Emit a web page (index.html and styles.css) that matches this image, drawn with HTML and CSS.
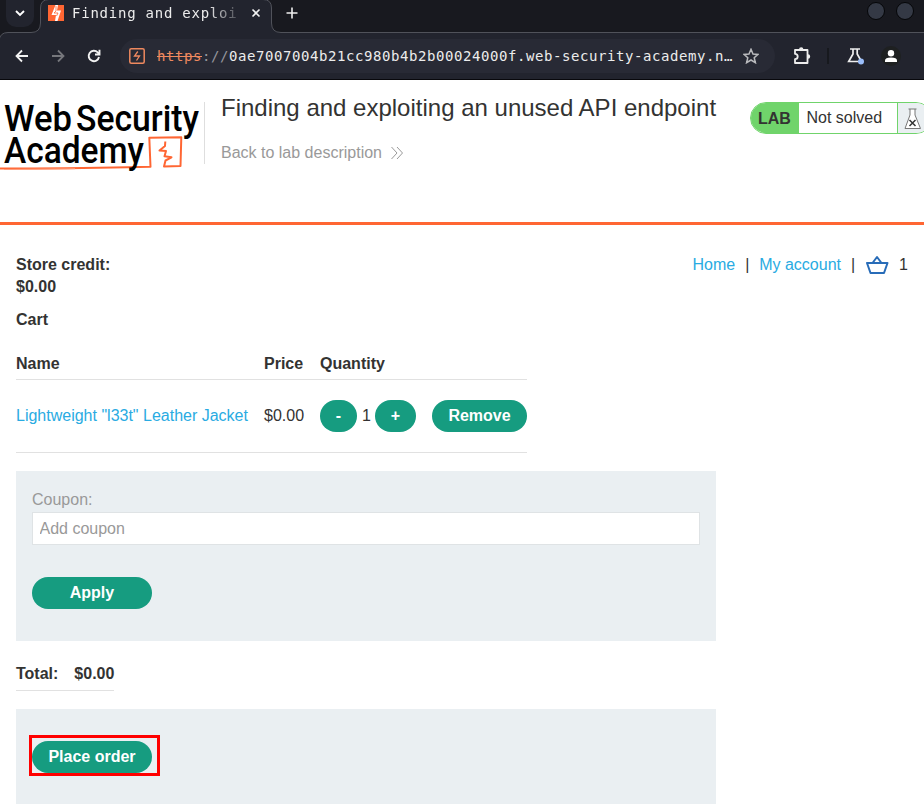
FILE: index.html
```html
<!DOCTYPE html>
<html lang="en">
<head>
<meta charset="utf-8">
<title>Finding and exploiting an unused API endpoint</title>
<link rel="stylesheet" href="styles.css">
</head>
<body>
<div class="browser">
  <svg class="frame" width="924" height="80" viewBox="0 0 924 80">
    <path d="M-1 81V40.500Q0 32.500 8 32.500H31Q40.500 32.500 40.500 23V8Q40.500 -0.500 49 -0.500H263Q271.500 -0.500 271.500 8V23Q271.500 32.500 281 32.500H925V81Z" fill="#22242e" stroke="#50525a"/>
    <path d="M0 79.500H924" stroke="#08080c"/>
  </svg>
  <div class="tabs">
    <div class="tab-menu"><svg width="34" height="27" viewBox="0 0 34 27"><path d="M10 11l4 4 4-4" fill="none" stroke="#fff" stroke-width="1.900"/></svg></div>
    <div class="tab">
      <svg width="16" height="16" viewBox="0 0 16 16"><path fill="#ff6633" d="M0 0h16v16H0z"/><path fill="#fff" d="M7.500 0H10L9 5.500h4L9.500 16H7l1-6H3.500z"/><path d="M8 1v5l-2 2h4l-1.500 3" fill="none" stroke="#ff6633" stroke-width=".8"/></svg>
      <span class="tab-title">Finding and exploi</span>
      <svg class="close" width="10" height="10" viewBox="0 0 10 10"><path d="M1.500 1.500l7 7m0-7l-7 7" stroke="#f2f2f2" stroke-width="1.600"/></svg>
    </div>
    <svg class="plus" width="12" height="12" viewBox="0 0 12 12"><path d="M6 .5v11M.5 6h11" stroke="#eee" stroke-width="1.600"/></svg>
    <div class="window-dots"><i></i><i></i></div>
  </div>
  <div class="toolbar">
    <svg class="back" width="14" height="14" viewBox="0 0 14 14"><path d="M13 7H2m5-5.500L1.500 7 7 12.500" fill="none" stroke="#f2f2f2" stroke-width="1.800"/></svg>
    <svg class="forward" width="14" height="14" viewBox="0 0 14 14"><path d="M1 7h11M7 1.500L12.500 7 7 12.500" fill="none" stroke="#76777c" stroke-width="1.800"/></svg>
    <svg class="reload" width="14" height="14" viewBox="0 0 14 14"><path d="M12 8a5.200 5.200 0 1 1-1.300-4.600L13 5.300M12.500.8v4.700H8" fill="none" stroke="#f2f2f2" stroke-width="1.900"/></svg>
    <div class="address">
      <svg width="16" height="16" viewBox="0 0 16 16"><rect x=".8" y=".8" width="14.400" height="14.400" rx="1.500" fill="none" stroke="#ef895f" stroke-width="1.500"/><path d="M8.800 3.500L5.500 8h5L7.500 12.500" fill="none" stroke="#ef895f" stroke-width="1.300"/></svg>
      <span class="url"><s>https</s><em>://</em>0ae7007004b21cc980b4b2b00024000f.web-security-academy.n…</span>
      <svg class="star" width="16" height="16" viewBox="0 0 16 16"><path d="M8 1.300l2 4.700 5 .4-3.800 3.300 1.200 5L8 12l-4.400 2.700 1.200-5L1 6.400 6 6z" fill="none" stroke="#b9babd" stroke-width="1.500"/></svg>
    </div>
    <svg class="puzzle" width="18" height="18" viewBox="0 0 18 18"><path d="M2 3h12.500V16H2v-3.800a2.700 2.700 0 0 0 0-5.400z" fill="none" stroke="#ededed" stroke-width="1.800" stroke-linejoin="round"/><path d="M6 2.500a2.200 2.200 0 0 1 4.400 0zM15 7.300a2.200 2.200 0 0 1 0 4.400z" fill="#ededed"/></svg>
    <i class="tool-divider"></i>
    <svg class="labs" width="18" height="18" viewBox="0 0 18 18"><path d="M3 2h10M6 2v5L1.700 14.500H14.500L10.200 7V2" fill="none" stroke="#eee" stroke-width="1.700"/><circle cx="14" cy="14.500" r="3" fill="#9abdf9"/></svg>
    <svg class="profile" width="20" height="20" viewBox="0 0 20 20"><circle cx="10" cy="10" r="10" fill="#1e2021"/><circle cx="10" cy="7.200" r="3.200" fill="#fff"/><path d="M4 16v-1.500q0-3 6-3t6 3V16z" fill="#fff"/></svg>
  </div>
</div>
<header class="lab-header">
  <svg class="logo" width="204" height="92" viewBox="0 0 204 92">
    <path d="M0 88.500Q70 88.500 128 87.300L150.500 86.800L149.300 57.800L181.300 57.300L180.500 86L164 86.500L165.500 80.500L171.500 77.300L164.500 76.300L166 71L159.500 70.500L165 66L165.300 61.500" fill="none" stroke="#ff6633" stroke-width="2" stroke-linejoin="round"/>
    <path d="M4 89.500L75 88.700" stroke="#ff9c7b"/>
    <g class="logo-text">
      <text x="4" y="50.500" textLength="68" lengthAdjust="spacingAndGlyphs">Web</text>
      <text x="76" y="50.500" textLength="123" lengthAdjust="spacingAndGlyphs">Security</text>
      <text x="4" y="83" textLength="140" lengthAdjust="spacingAndGlyphs">Academy</text>
    </g>
  </svg>
  <div class="heading">
    <h2>Finding and exploiting an unused API endpoint</h2>
    <a class="back-link">Back to lab description <svg width="12" height="14" viewBox="0 0 12 14"><path d="M.5 1l5.500 6-5.500 6M6 1l5.500 6L6 13" fill="none" stroke="#999"/></svg></a>
  </div>
  <div class="status"><b>LAB</b><span>Not solved</span><div class="flask"><svg width="18" height="22" viewBox="0 0 18 22"><path d="M4.500 1h8M6 1v6L1 20.500h15.500L11 7V1" fill="#fff" stroke="#777"/><path d="M5.500 12l6 6m0-6l-6 6" stroke="#333" stroke-width="1.500"/></svg></div></div>
</header>
<main>
  <div class="top-row">
    <div class="credit">Store credit:<br>$0.00</div>
    <nav><a>Home</a><span>|</span><a>My account</a><span>|</span>
      <svg width="24" height="20" viewBox="0 0 24 20"><path d="M2 8h20.500L19 18H5.500zM7.500 8L12 2l4.500 6" fill="none" stroke="#286cb8" stroke-width="2" stroke-linejoin="round"/></svg><span class="count">1</span></nav>
  </div>
  <h1>Cart</h1>
  <div class="cart">
    <div class="row head"><span>Name</span><span>Price</span><span>Quantity</span></div>
    <div class="row item"><a>Lightweight "l33t" Leather Jacket</a><span>$0.00</span><div class="quantity"><button>-</button><span>1</span><button class="add">+</button></div><button class="remove">Remove</button></div>
  </div>
  <section class="panel coupon">
    <label>Coupon:</label>
    <input placeholder="Add coupon">
    <button class="wide">Apply</button>
  </section>
  <div class="total"><span>Total:</span><span>$0.00</span></div>
  <section class="panel order"><div class="highlight"><button class="wide">Place order</button></div></section>
</main>
</body>
</html>
```
FILE: styles.css
```css
* { box-sizing: border-box; }
body { margin: 0; width: 924px; height: 804px; overflow: hidden; background: #fff; color: #333332; font: 16px/22px "Liberation Sans", sans-serif; }
svg { display: block; flex: none; }
a { color: #29abe2; }

.browser { position: relative; height: 80px; background: #18191f; font-family: "DejaVu Sans Mono", monospace; color: #ececec; overflow: hidden; }
.frame { position: absolute; left: 0; top: 0; }
.tabs { position: relative; display: flex; height: 33px; }
.tab-menu { width: 28px; height: 27px; margin-left: 6px; background: #22242e; border-radius: 0 0 10px 10px; }
.tab { display: flex; width: 213px; margin-left: 14px; padding-top: 5px; }
.tab-title { margin-left: 8px; width: 166px; overflow: hidden; white-space: nowrap; font-size: 14px; letter-spacing: .76px; line-height: 17px; -webkit-mask-image: linear-gradient(90deg, #000 82%, transparent 104%); mask-image: linear-gradient(90deg, #000 82%, transparent 104%); }
.close { margin: 3px 0 0 13px; }
.plus { margin: 7px 0 0 25px; }
.window-dots { display: flex; gap: 11px; margin: 2px 10px 0 auto; }
.window-dots i { width: 18px; height: 18px; border: 1px solid #050608; border-radius: 50%; background: #343945; }
.toolbar { position: relative; display: flex; align-items: center; height: 46px; }
.back { margin-left: 15px; }
.forward { margin-left: 22px; }
.reload { margin-left: 22px; }
.address { display: flex; align-items: center; width: 655px; height: 34px; margin-left: 19px; padding-left: 9px; border-radius: 17px; background: #282a35; }
.url { width: 578px; margin-left: 12px; font-size: 14px; letter-spacing: .57px; white-space: nowrap; }
.url s { color: #ef895f; }
.url em { font-style: normal; color: #96979d; }
.star { margin-left: 8px; }
.puzzle { margin-left: 18px; }
.tool-divider { width: 2px; height: 16px; margin-left: 16px; background: #17191e; }
.labs { margin-left: 18px; }
.profile { margin-left: 16px; }

.lab-header { display: flex; height: 145px; border-bottom: 3px solid #ff6633; overflow: hidden; }
.logo-text { font: 500 37.5px Roboto, sans-serif; fill: #000; }
.heading { flex: none; width: 546px; height: 62px; margin-top: 22px; padding-left: 16px; border-left: 1px solid #dedede; }
h2 { margin: -8px 0 0; font-size: 24px; line-height: 28px; font-weight: 400; white-space: nowrap; }
.back-link { display: flex; align-items: center; gap: 9px; margin-top: 20px; line-height: 22px; color: #999; }
.status { display: flex; flex: none; width: 182px; height: 32px; margin-top: 22px; border: 1px solid #70d46b; border-radius: 16px; overflow: hidden; line-height: 29px; }
.status b { flex: none; width: 48px; padding-left: 7px; background: #70d46b; line-height: 31px; }
.status > span { flex: none; width: 98px; padding-left: 7.5px; }
.flask { flex: none; width: 34px; padding: 5px 6px; border-left: 1px solid #70d46b; background: #eaeff2; }

main { padding: 29px 16px 0; }
.top-row { display: flex; justify-content: space-between; }
.credit { font-weight: 700; }
nav { display: flex; height: 22px; }
nav > span { width: 4px; margin: 0 10px; }
nav svg { margin-top: 1px; }
nav .count { width: 9px; margin: 0 0 0 10px; }
h1 { margin: 11px 0 0; font-size: 16px; line-height: 22px; }
.cart { width: 511px; margin-top: 22px; }
.row { display: grid; grid-template-columns: 232px 40px 96px 95px; column-gap: 16px; align-items: center; border-bottom: 1px solid #e1e1e1; }
.head { height: 27px; font-weight: 700; align-items: start; }
.item { height: 73px; }
.item a { white-space: nowrap; }
.quantity { display: flex; align-items: center; }
.quantity span { width: 18px; padding-left: 5px; }
button { display: block; height: 32px; padding: 0; border: 0; border-radius: 16px; background: #169c80; color: #fff; font: 700 16px "Liberation Sans", sans-serif; }
.quantity button { width: 37px; }
.quantity .add { width: 41px; }
.panel { width: 700px; background: #eaeff2; padding: 0 16px; }
.coupon { height: 170px; margin-top: 18px; padding-top: 18px; }
.coupon label { display: block; height: 23px; color: #999; }
input { display: block; width: 668px; height: 33px; padding: 0 6.5px; border: 1px solid #dfe3e5; background: #fff; font: 16px "Liberation Sans", sans-serif; }
input::placeholder { color: #999; }
.wide { width: 120px; }
.coupon .wide { margin-top: 32px; }
.total { display: flex; gap: 16px; width: 98px; height: 28px; margin-top: 22px; border-bottom: 1px solid #e1e1e1; font-weight: 700; white-space: nowrap; }
.order { height: 96px; margin-top: 18px; padding: 26px 13px; }
.highlight { width: 131px; height: 41px; padding: 3px 0 0 0; border: 3px solid #f00; }
```
